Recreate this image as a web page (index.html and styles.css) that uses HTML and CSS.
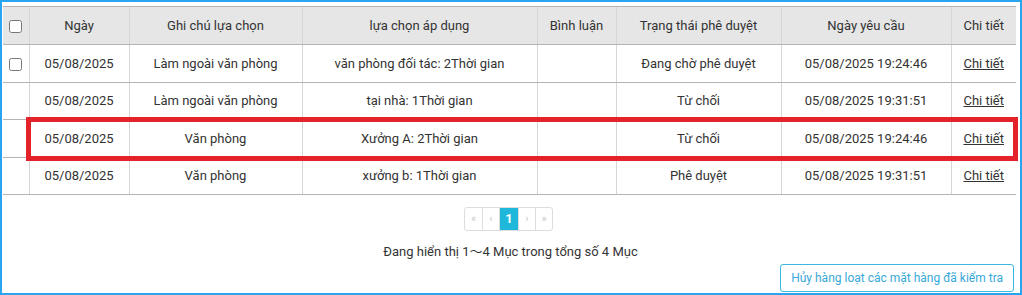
FILE: index.html
```html
<!DOCTYPE html>
<html lang="vi">
<head>
    <meta charset="UTF-8">
    <meta name="viewport" content="width=device-width, initial-scale=1.0">
    <title>Danh sách yêu cầu</title>
    <link rel="stylesheet" href="styles.css">
</head>
<body>

<div class="panel">
    <div class="table-wrap">
        <table class="req-table">
            <colgroup>
                <col style="width: 26px">
                <col style="width: 100px">
                <col style="width: 173px">
                <col style="width: 235px">
                <col style="width: 79px">
                <col style="width: 165px">
                <col style="width: 170px">
                <col style="width: 65px">
            </colgroup>
            <thead>
                <tr>
                    <th><input type="checkbox"></th>
                    <th>Ngày</th>
                    <th>Ghi chú lựa chọn</th>
                    <th>lựa chọn áp dụng</th>
                    <th>Bình luận</th>
                    <th>Trạng thái phê duyệt</th>
                    <th>Ngày yêu cầu</th>
                    <th>Chi tiết</th>
                </tr>
            </thead>
            <tbody>
                <tr>
                    <td><input type="checkbox"></td>
                    <td>05/08/2025</td>
                    <td>Làm ngoài văn phòng</td>
                    <td>văn phòng đối tác: 2Thời gian</td>
                    <td></td>
                    <td>Đang chờ phê duyệt</td>
                    <td>05/08/2025 19:24:46</td>
                    <td><a href="#">Chi tiết</a></td>
                </tr>
                <tr>
                    <td></td>
                    <td>05/08/2025</td>
                    <td>Làm ngoài văn phòng</td>
                    <td>tại nhà: 1Thời gian</td>
                    <td></td>
                    <td>Từ chối</td>
                    <td>05/08/2025 19:31:51</td>
                    <td><a href="#">Chi tiết</a></td>
                </tr>
                <tr>
                    <td></td>
                    <td>05/08/2025</td>
                    <td>Văn phòng</td>
                    <td>Xưởng A: 2Thời gian</td>
                    <td></td>
                    <td>Từ chối</td>
                    <td>05/08/2025 19:24:46</td>
                    <td><a href="#">Chi tiết</a></td>
                </tr>
                <tr>
                    <td></td>
                    <td>05/08/2025</td>
                    <td>Văn phòng</td>
                    <td>xưởng b: 1Thời gian</td>
                    <td></td>
                    <td>Phê duyệt</td>
                    <td>05/08/2025 19:31:51</td>
                    <td><a href="#">Chi tiết</a></td>
                </tr>
            </tbody>
        </table>
        <!-- khung đỏ đánh dấu dòng thứ 3 -->
        <div class="mark-box"></div>
    </div>

    <ul class="pager">
        <li class="off">&laquo;</li>
        <li class="off">&lsaquo;</li>
        <li class="active">1</li>
        <li class="off">&rsaquo;</li>
        <li class="off">&raquo;</li>
    </ul>

    <p class="info">Đang hiển thị 1<span class="tilde">～</span>4 Mục trong tổng số 4 Mục</p>

    <div class="actions">
        <button class="btn-cancel">Hủy hàng loạt các mặt hàng đã kiểm tra</button>
    </div>
</div>

</body>
</html>
```

FILE: styles.css
```css
* {
    box-sizing: border-box;
}

body {
    margin: 0;
    font-family: Roboto, "Noto Sans", sans-serif;
    font-size: 13px;
    color: #333;
    background: #fff;
}

.panel {
    width: 1022px;
    height: 295px;
    border: 2px solid #29a4ee;
    padding: 4px 4px 0 1px;
    display: flex;
    flex-direction: column;
}

.table-wrap {
    position: relative;
}

.req-table {
    width: 1013px;
    border-collapse: collapse;
    table-layout: fixed;
}

.req-table th,
.req-table td {
    text-align: center;
    padding: 0;
    border-bottom: 1px solid #b4b4b4;
    border-left: 1px solid #d6d6d6;
    font-weight: normal;
    white-space: nowrap;
}

.req-table th:first-child,
.req-table td:first-child {
    border-left: none;
}

.req-table th {
    background: #e6e6e6;
    border-top: 1px solid #b4b4b4;
    height: 38px;
    padding-bottom: 1px;
}

.req-table td {
    height: 37.5px;
}

.req-table input[type="checkbox"] {
    margin: 0;
    width: 13px;
    height: 13px;
    vertical-align: middle;
}

.req-table a {
    color: #333;
    text-decoration: underline;
}

.mark-box {
    position: absolute;
    left: 23px;
    top: 111px;
    width: 992px;
    height: 44px;
    border: 5px solid #e4222a;
    pointer-events: none;
}

.pager {
    list-style: none;
    margin: 12px 0 0 461px;
    padding: 0;
    display: flex;
    align-self: flex-start;
    border: 1px solid #ddd;
    border-radius: 3px;
}

.pager li {
    width: 17px;
    height: 22px;
    line-height: 22px;
    text-align: center;
    font-size: 11px;
    border-left: 1px solid #ddd;
}

.pager li:first-child {
    border-left: none;
}

.pager li.off {
    color: #c8c8c8;
}

.pager li.active {
    background: #1fb8db;
    color: #fff;
    font-weight: bold;
    font-size: 13px;
    width: 19px;
}

.info {
    margin: 11px 0 0;
    text-align: center;
    line-height: 18px;
    padding-left: 2px;
}

.tilde {
    font-family: "Noto Sans CJK JP", sans-serif;
}

.actions {
    display: flex;
    justify-content: flex-end;
    margin-top: 3px;
    padding-right: 2px;
}

.btn-cancel {
    font-family: Roboto, "Noto Sans", sans-serif;
    font-size: 12px;
    color: #39a8d8;
    background: #fff;
    border: 1px solid #3bb8e2;
    border-radius: 3px;
    height: 28px;
    padding: 0 10px;
    cursor: pointer;
}
```
